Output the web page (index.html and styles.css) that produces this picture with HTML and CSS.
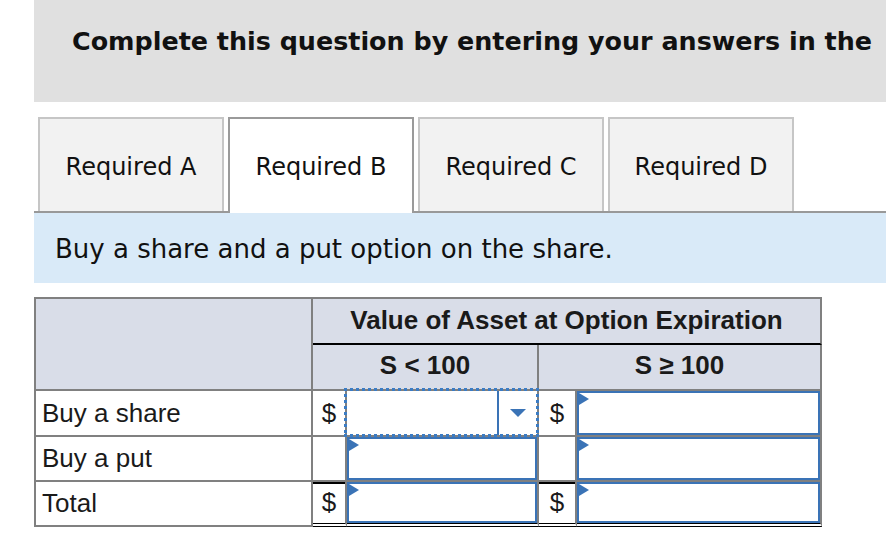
FILE: index.html
```html
<!DOCTYPE html>
<html>
<head>
<meta charset="utf-8">
<link rel="stylesheet" href="styles.css">
</head>
<body>
<div class="page">
  <div class="banner"><h1 class="banner-text">Complete this question by entering your answers in the</h1></div>
  <div class="tabs">
    <div class="tab">Required A</div>
    <div class="tab active">Required B</div>
    <div class="tab">Required C</div>
    <div class="tab">Required D</div>
  </div>
  <div class="band">Buy a share and a put option on the share.</div>
  <table class="grid">
    <colgroup>
      <col class="c-label"><col class="c-dollar1"><col class="c-in1"><col class="c-dollar2"><col class="c-in2">
    </colgroup>
    <tr class="h1">
      <th class="hd corner" rowspan="2"></th>
      <th class="hd top" colspan="4">Value of Asset at Option Expiration</th>
    </tr>
    <tr class="h2">
      <th class="hd" colspan="2">S &lt; 100</th>
      <th class="hd" colspan="2">S ≥ 100</th>
    </tr>
    <tr class="r1">
      <td class="label">Buy a share</td>
      <td class="dollar">$</td>
      <td class="in"><div class="select"><span class="sel-btn"><span class="caret"></span></span></div></td>
      <td class="dollar">$</td>
      <td class="in"><div class="inp"><span class="flag"></span></div></td>
    </tr>
    <tr class="r2">
      <td class="label">Buy a put</td>
      <td class="dollar"></td>
      <td class="in"><div class="inp"><span class="flag"></span></div></td>
      <td class="dollar"></td>
      <td class="in"><div class="inp"><span class="flag"></span></div></td>
    </tr>
    <tr class="total">
      <td class="label">Total</td>
      <td class="dollar">$</td>
      <td class="in"><div class="inp"><span class="flag"></span></div></td>
      <td class="dollar">$</td>
      <td class="in"><div class="inp"><span class="flag"></span></div></td>
    </tr>
  </table>
</div>
</body>
</html>
```
FILE: styles.css
```css
html, body { margin: 0; padding: 0; background: #fff; }
body { font-family: "DejaVu Sans", Verdana, sans-serif; color: #111; overflow: hidden; }
.page { padding-left: 34px; width: 1100px; }

.banner { background: #e0e0e0; height: 102px; box-sizing: border-box; padding: 24px 0 0 38px; }
.banner-text { margin: 0; font-size: 25.4px; font-weight: bold; white-space: nowrap; line-height: 34px; color: #111; letter-spacing: 0; }

.tabs { display: flex; gap: 4px; padding-left: 4px; margin-top: 15px; border-bottom: 2px solid #999; width: 852px; box-sizing: border-box; }
.tab { width: 186px; height: 94px; box-sizing: border-box; border: 2px solid #c6c6c6; border-bottom: none; background: #f2f2f2; display: flex; align-items: center; justify-content: center; padding-top: 3px; font-size: 24px; color: #111; }
.tab.active { background: #fff; border-color: #9a9a9a; height: 96px; margin-bottom: -2px; padding-top: 1px; }

.band { background: #d9eaf8; height: 70px; width: 852px; box-sizing: border-box; padding-left: 21px; padding-top: 2px; font-size: 26px; display: flex; align-items: center; color: #111; }

.grid { margin-top: 14px; border-collapse: separate; border-spacing: 0; border-top: 2px solid #808080; border-left: 2px solid #808080; table-layout: fixed; width: 787px; font-family: "Liberation Sans", Arial, sans-serif; font-size: 26px; color: #1a1a1a; }
.c-label { width: 277px; }
.c-dollar1 { width: 34px; }
.c-in1 { width: 192px; }
.c-dollar2 { width: 38px; }
.c-in2 { width: 245px; }
.grid th, .grid td { border-right: 2px solid #808080; border-bottom: 2px solid #808080; padding: 0; box-sizing: content-box; }
.h1 th { height: 44px; }
.h2 th { height: 44px; }
.h1 th.top { padding-bottom: 2px; height: 42px; }
.h2 th { padding-bottom: 3px; height: 41px; }
.r1 td { height: 44px; }
.r2 td { height: 43px; }
.total td { height: 41px; }
.hd { background: #d9dde8; font-weight: bold; text-align: center; }
.hd.top { border-bottom-color: #000; }
.label { padding-left: 6px !important; }
.dollar { text-align: center; }
.total td.dollar, .total td.in { box-shadow: inset 0 2px 0 #000; }
.total td { border-bottom: 4px double #000; }
.total td.label { border-bottom: 2px solid #808080; height: 43px; }

.in { position: relative; }
.inp { position: relative; height: 44px; box-sizing: border-box; border: 2px solid #3a73b6; background: #fff; }
.r2 .inp { height: 43px; }
.total .inp { height: 41px; }
.flag { position: absolute; left: 0; top: 0; width: 0; height: 0; border-top: 6px solid transparent; border-bottom: 6px solid transparent; border-left: 10px solid #3a73b6; }
.select { position: relative; height: 44px; background: #fff; }
.select::after {
  content: ""; position: absolute; left: -3px; top: -3px; right: -2px; bottom: -2px; pointer-events: none;
  background:
    radial-gradient(circle at 1.5px 1.5px, #3b7cc4 1.5px, transparent 2px) 0 0 / 6px 3px repeat-x,
    radial-gradient(circle at 1.5px 1.5px, #3b7cc4 1.5px, transparent 2px) 0 100% / 6px 3px repeat-x,
    radial-gradient(circle at 1.5px 1.5px, #3b7cc4 1.5px, transparent 2px) 0 0 / 3px 6px repeat-y,
    radial-gradient(circle at 1.5px 1.5px, #3b7cc4 1.5px, transparent 2px) 100% 0 / 3px 6px repeat-y;
}
.sel-btn { position: absolute; right: 0; top: 0; bottom: 0; width: 38px; border-left: 2px solid #3a73b6; display: flex; align-items: center; justify-content: center; }
.caret { width: 0; height: 0; border-left: 8px solid transparent; border-right: 8px solid transparent; border-top: 8px solid #3a73b6; }
```
